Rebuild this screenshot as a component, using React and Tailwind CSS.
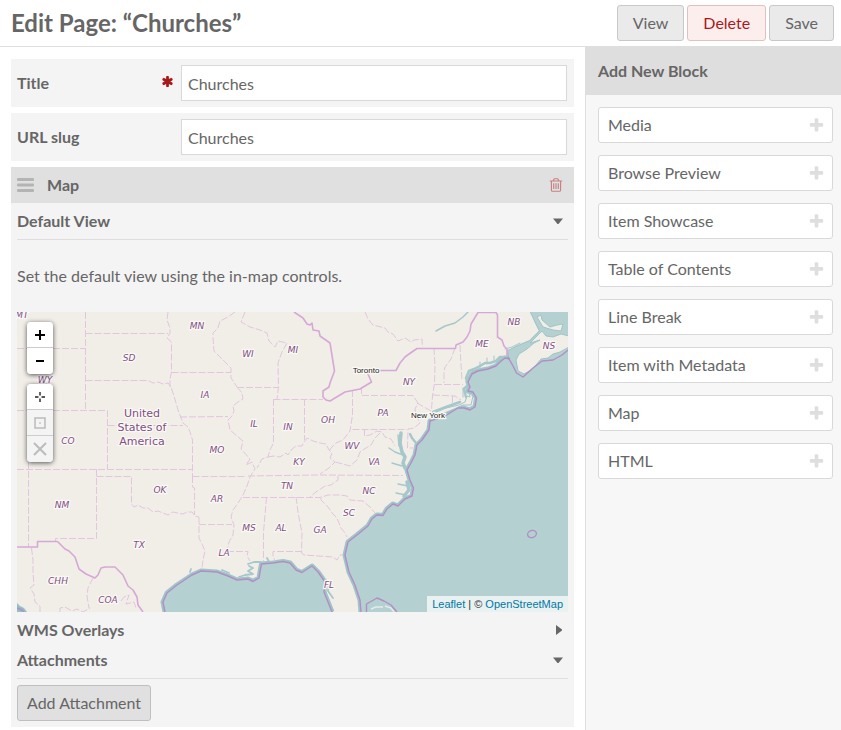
import React from "react";

const BLOCKS = [
  "Media",
  "Browse Preview",
  "Item Showcase",
  "Table of Contents",
  "Line Break",
  "Item with Metadata",
  "Map",
  "HTML",
];

const STATE_LABELS = [
  ["MT", 22, 318],
  ["MN", 197, 329],
  ["SD", 129, 361],
  ["WY", 45, 383],
  ["CO", 68, 444],
  ["IA", 205, 398],
  ["WI", 248, 357],
  ["MI", 293, 353],
  ["IL", 254, 427],
  ["IN", 288, 430],
  ["OH", 328, 423],
  ["PA", 383, 416],
  ["NY", 409, 385],
  ["ME", 482, 347],
  ["NB", 514, 325],
  ["NS", 549, 349],
  ["MO", 217, 453],
  ["KY", 299, 465],
  ["WV", 352, 449],
  ["VA", 374, 465],
  ["NM", 62, 508],
  ["OK", 160, 493],
  ["AR", 217, 502],
  ["TN", 287, 489],
  ["NC", 369, 494],
  ["SC", 349, 516],
  ["MS", 249, 531],
  ["AL", 281, 531],
  ["GA", 320, 533],
  ["TX", 139, 548],
  ["LA", 224, 556],
  ["CHH", 58, 584],
  ["COA", 108, 603],
  ["FL", 329, 588],
];

const STATE_LINES = [
  "M85.5 312V410",
  "M85.5 333.5H168",
  "M17 348.5H85",
  "M85.5 380.5H148L153 383L158 382L163 384L168 383L171 387L174 396L178 410L183 423L188 427L190 432L192.5 440V476",
  "M17 410.5H107.5V469",
  "M107.5 425.5H183",
  "M168 312L167 320L170 328V333L167 338L171.5 342V372L170 379V387",
  "M171.5 372.5H231",
  "M180 417L228 416.5",
  "M17 469.5H192",
  "M28.5 462V547",
  "M96.5 469V538.5H55.5V541",
  "M96.5 476.5H131.5V504L134 507L138 505L143 508L148 508L153 512L158 511L163 513L168 515L173 512L178 513L183 514L187 512L192 512L195 516L199 517",
  "M192.5 476V487L194.5 488V515",
  "M192.5 476.5H245",
  "M199 517V538L202 544L205 551L203 560L202 568",
  "M199 524.5H232",
  "M31.5 548L33 560V572L34 585L30 588L34 594L35 602L40 606V612",
  "M93 578L88 588L87 596L88 602L89 608",
  "M60 612V608L65 607L72 611L77 609L83 612L90 608",
  "M121 601L124 597L129 595L126 604L134 602L136 608",
  "M235 312L228 317L220 321L218 328L213 333L213 338L214 351L223 360L231 368V378L237 387",
  "M237 387.5H278",
  "M237 387L242 393L243 399L238 402L233 406L234 411L232 416L228 420L230 430L237 436L243 441L241 449L250 459L246 465L252 462L255 469L250 477L247 486L243 495L238 503L233 510L231 517L234 525L233 535L229 542L227 551",
  "M245 312L241 322L250 327L260 330L267 333L269 341L275 347L278 341L287 343L282 352L278 363L278.5 387L277 399",
  "M273.5 399.5H323",
  "M273.5 399V443L270 450L268 457L262 459L257 468",
  "M268 457L274 456L280 457L286 453L288 455L292 449L296 446L302 446L304 442L307 438L313 441L320 443L326 444L329 450L332 453L330 458L335 462L329 468L320 474",
  "M304.5 399V440",
  "M352.5 390V415L350 431L343 440L336 443L332 447L329 451",
  "M352.5 429.5H407",
  "M361.5 387V395.5H413L418 403L415 409L416 415L420 423L414 428L408 429L407.5 448H415",
  "M417 403L431 411",
  "M364.5 429V436L370 435L377 431L382 432L385 437L391 439L395 446",
  "M380 433L375 438L371 445L366 448L360 452L357 460L350 466L343 464L335 462",
  "M248 476L318 475L403 475.5",
  "M338 476V480L331 485L325 486L316 492L310 497",
  "M243 497.5H320L328 495H340L347 496L350 500L363 501L370 507L375 513",
  "M321 498V500L328 507L333 514L337 518L341 528L345 533L347 537",
  "M266.5 497L265 515L263.5 532V561",
  "M296 497L298 512L302 533L301.5 553L304 555L333 557L337 560L340 555L343 555",
  "M302 551.5H273V556L275 561",
  "M227 551.5H248L247 556L250 561",
  "M365 312L368 319L373 325L385 328L388 332L393 334L398 341L405 338L411 342L414 340L422 339L422.5 347",
  "M434 348L435 366L434.5 383L432.5 396L431.5 410",
  "M455 348L451 359L445 367L444 372V383",
  "M460 345L461 365L462 380",
  "M435 384.5H463",
  "M433 395L455 396L461 400",
  "M452.5 396V404",
];

const COUNTRY_LINES = [
  "M17 547H37.5V541.5H57.5L65 549L69 551L75 557L79 569L86 574L95 578L98 575L101 568L105 567H115L119 571L123 575L128 586L133 590L137 597L138 605L143 612",
  "M294 312L303 318L307 324L310 325L312 323L313 330L319 331L320 336L330 343L334.5 371L330 383L329 387L323 391V397L326 400L330 401L345 392L360 389L371.5 382L368 374L372 371L380 370.5H396L400 363L405 357L409 354L417 348.5H455.5L456 345L463 342L467 337L470 331L471 324L478 312.5H496L497.5 315V337L502 340L504 346L507 349V356",
];

const ATLANTIC_EDGE =
  "M510 359L505 358L500 362L496 366L488 369L478 371L472 374L468 382L470 387L468 391L473 392L476.5 398L475 407L470 410L464 408L458 408L445 416L430 421L429 430L422 440L417 445L415 455L411 463L407 470L410 480L413.5 488L412 496L405 499L398 506L393 504L387 509L383 515.5L377 515L372 519L368 526L357 535L348 542L345 555L349 572L355 585L360 600L361 612";

const GULF_EDGE =
  "M332 612L328 602L324 592L325 582L318 572L312 566L302 572.5L296 570L290 563L283 561.5L273 563L261.5 564L260 572L259 578L253 581.5L248 579L237 580L228 576L217 572L201 571L192 575L177 585L167 593L163 602L165 612";

const NOVA_SCOTIA_EDGE =
  "M508 357L513 366L516.5 373L523 377L533 368L542 361L553 360L562 355L568 350";

const ASTERISK =
  "M1546 1050q46 26 59.5 77.5t-12.5 97.5l-64 110q-26 46-77.5 59.5t-97.5-12.5l-266-153v307q0 52-38 90t-90 38h-128q-52 0-90-38t-38-90v-307l-266 153q-46 26-97.5 12.5t-77.5-59.5l-64-110q-26-46-12.5-97.5t59.5-77.5l266-154-266-154q-46-26-59.5-77.5t12.5-97.5l64-110q26-46 77.5-59.5t97.5 12.5l266 153v-307q0-52 38-90t90-38h128q52 0 90 38t38 90v307l266-153q46-26 97.5-12.5t77.5 59.5l64 110q26 46 12.5 97.5t-59.5 77.5l-266 154z";

const PLUS =
  "M1600 736v192q0 40-28 68t-68 28h-416v416q0 40-28 68t-68 28h-192q-40 0-68-28t-28-68v-416h-416q-40 0-68-28t-28-68v-192q0-40 28-68t68-28h416v-416q0-40 28-68t68-28h192q40 0 68 28t28 68v416h416q40 0 68 28t28 68z";

const TRASH =
  "M704 736v576q0 14-9 23t-23 9h-64q-14 0-23-9t-9-23v-576q0-14 9-23t23-9h64q14 0 23 9t9 23zm256 0v576q0 14-9 23t-23 9h-64q-14 0-23-9t-9-23v-576q0-14 9-23t23-9h64q14 0 23 9t9 23zm256 0v576q0 14-9 23t-23 9h-64q-14 0-23-9t-9-23v-576q0-14 9-23t23-9h64q14 0 23 9t9 23zm128 724v-948h-896v948q0 22 7 40.5t14.5 27 10.5 8.5h832q3 0 10.5-8.5t14.5-27 7-40.5zm-672-1076h448l-48-117q-7-9-17-11h-317q-10 2-17 11zm928 32v64q0 14-9 23t-23 9h-96v948q0 83-47 143.5t-113 60.5h-832q-66 0-113-58.5t-47-141.5v-952h-96q-14 0-23-9t-9-23v-64q0-14 9-23t23-9h309l70-167q15-37 54-63t79-26h320q40 0 79 26t54 63l70 167h309q14 0 23 9t9 23z";

function Glyph({ d, className }) {
  return (
    <svg viewBox="0 0 1792 1792" className={className} fill="currentColor" aria-hidden="true">
      <path d={d} />
    </svg>
  );
}

function Caret({ open }) {
  return (
    <svg viewBox="0 0 10 10" className="size-[10px]" fill="#666" aria-hidden="true">
      <path d={open ? "M0 2.5H10L5.5 8H4.5Z" : "M3 0L9 4.5V5.5L3 10Z"} />
    </svg>
  );
}

function Field({ id, label, required }) {
  return (
    <div className="flex bg-[#f4f4f4] py-[6px] pr-[7px] pl-[6px]">
      <label htmlFor={id} className="flex w-[164px] justify-between pt-[6px] pr-[7px] font-bold">
        {label}
        {required && <Glyph d={ASTERISK} className="mt-1 size-[13px] text-[#a91919]" />}
      </label>
      <input
        id={id}
        type="text"
        defaultValue="Churches"
        className="h-9 min-w-0 flex-1 border border-[#d9d9d9] bg-white px-[6px] outline-none"
      />
    </div>
  );
}

function SectionToggle({ open, children }) {
  return (
    <h3 className={open ? "border-b border-[#dedede] pb-[6px] font-bold" : "font-bold"}>
      <button
        type="button"
        aria-expanded={open}
        className="flex w-full items-center justify-between pr-[5px] text-left leading-6"
      >
        {children}
        <Caret open={open} />
      </button>
    </h3>
  );
}

function MapCanvas() {
  return (
    <svg
      viewBox="17 312 551 300"
      preserveAspectRatio="xMidYMid slice"
      className="block h-[300px] w-full bg-[#f1eee8]"
      role="img"
      aria-label="Map of the eastern United States"
    >
      <g stroke="#a0c5c8" strokeWidth="5" strokeLinejoin="round" fill="none">
        <path d={ATLANTIC_EDGE} />
        <path d={GULF_EDGE} />
        <path d="M530 310L536 323L540 331L530 341L518 346L508 351V357" strokeWidth="2" />
      </g>
      <g fill="#b5d0d0">
        <path d={ATLANTIC_EDGE + "H570V310H530L536 323L540 331L530 341L518 346L508 351Z"} />
        <path d={GULF_EDGE + "Z"} />
        <path d="M17 603L20 606L24 608L27 612H17Z" fill="#94bfc3" />
      </g>
      <g fill="#f1eee8" stroke="#a0c5c8" strokeWidth="1">
        <path d="M516 360L519 354L527 349L534 343L540 340L530 343L542 331L546 336L553 337L561 334L569 336V347L560 352L553 354L548 358L541 359L536 365L531 370L524 374L518 371Z" />
        <path d="M537 317L541 315L542 320L550 327L557 325L563 324L561 331L553 330L543 327Z" />
        <path d="M434 413L446 408L459 405L465 402L467 396L470 397L469 393L473 396L471 405L463 405L454 409L442 414L434 416Z" />
        <path d="M371 609L376 607L383 607M385 606L391 608L394 612" fill="none" stroke="#e5ecea" strokeWidth="1.4" />
      </g>
      <g fill="none" stroke="#a6c8ca" strokeLinecap="round" strokeLinejoin="round">
        <path d="M436 331L445 326L455 323L463 317L468 312" strokeWidth="1.5" />
        <path d="M506 357L500 357L496 361L490 363L485 363L480 366L474 369L469 371L466 378L468 385L464 389L466 397" strokeWidth="2.5" />
        <path d="M494 356V360M487 358V364M480 362V368M463 388V397M505 349L512 347L520 343" strokeWidth="1" />
        <path d="M433 412L446 407L460 402" strokeWidth="2.5" />
        <path d="M401 433L400 443L402 452L405 457L403 463L405 468" strokeWidth="3.5" />
        <path d="M410 434L412 438L416 443" strokeWidth="2.5" />
        <path d="M389 448L395 452L403 455M392 463L402 466M398 435L399 446M398 484L408 486M396 493L406 495" strokeWidth="1.4" />
        <path d="M407 482L409 490L404 496" strokeWidth="3.500" />
        <path d="M248 564L254 562H261M249 566L253 568L248 571L253 574L245 575L239 577M267 558L269 562M222 570L229 573M190 572L191 569" strokeWidth="1.8" />
        <path d="M326 580L329 584L328 591L333 598" strokeWidth="1.8" />
      </g>
      <g fill="none" stroke="#e2c5df" strokeWidth="1" strokeDasharray="7 2">
        {STATE_LINES.map((d) => (
          <path key={d} d={d} />
        ))}
      </g>
      <g fill="none" stroke="#d6a8d5" strokeWidth="1.6" strokeLinejoin="round">
        {COUNTRY_LINES.map((d) => (
          <path key={d} d={d} />
        ))}
      </g>
      <g fill="none" stroke="#b08fc6" strokeWidth="1.4" strokeLinejoin="round">
        <path d={ATLANTIC_EDGE} />
        <path d={GULF_EDGE} />
        <path d={NOVA_SCOTIA_EDGE} />
        <path d="M366.5 612V604L377 598L384 601L391 605L397 612" />
        <path d="M17 608L22 610L24 612" />
        <ellipse cx="532" cy="534" rx="4.5" ry="3.5" transform="rotate(-20 532 534)" />
      </g>
      <g
        textAnchor="middle"
        fill="#804f83"
        stroke="#fbf9f6"
        strokeWidth="2.5"
        strokeLinejoin="round"
        paintOrder="stroke"
        fontFamily="'DejaVu Sans', sans-serif"
      >
        <g fontSize="9" fontStyle="italic">
          {STATE_LABELS.map(([name, x, y]) => (
            <text key={name} x={x} y={y}>
              {name}
            </text>
          ))}
        </g>
        <g fontSize="11">
          <text x="142" y="417">United</text>
          <text x="142" y="431">States of</text>
          <text x="142" y="445">America</text>
        </g>
        <g fontSize="8" fill="#222" fontFamily="'Liberation Sans', Arial, sans-serif">
          <text x="366" y="373">Toronto</text>
          <text x="428" y="418">New York</text>
        </g>
      </g>
    </svg>
  );
}

const BAR = "flex w-[26px] flex-col overflow-hidden rounded shadow-[0_1px_5px_rgba(0,0,0,0.65)]";
const BAR_BUTTON = "flex h-[26px] items-center justify-center border-b border-[#ccc] bg-white last:border-b-0";
const BAR_BUTTON_OFF =
  "flex h-[26px] items-center justify-center border-b border-[#ccc] bg-[#f4f4f4] last:border-b-0";

function MapControls() {
  return (
    <div className="absolute top-[10px] left-[10px] flex flex-col gap-[10px]">
      <div className={BAR}>
        <button type="button" aria-label="Zoom in" className={BAR_BUTTON}>
          <svg viewBox="0 0 10 10" className="size-[10px]" stroke="#000" strokeWidth="2">
            <path d="M5 0V10M0 5H10" />
          </svg>
        </button>
        <button type="button" aria-label="Zoom out" className={BAR_BUTTON}>
          <svg viewBox="0 0 10 10" className="size-[10px]" stroke="#000" strokeWidth="2">
            <path d="M1 5H9" />
          </svg>
        </button>
      </div>
      <div className={BAR}>
        <button type="button" aria-label="Set the current view as the default view" className={BAR_BUTTON}>
          <svg viewBox="0 0 10 10" className="size-[10px]" stroke="#222" strokeWidth="1.4">
            <path d="M5 0V3.5M5 6.5V10M0 5H3.5M6.5 5H10" />
          </svg>
        </button>
        <button type="button" disabled aria-label="Go to the default view" className={BAR_BUTTON_OFF}>
          <svg viewBox="0 0 12 12" className="size-3" fill="none" stroke="#bbb" strokeWidth="1.5">
            <path d="M1 1H11V11H1ZM5.25 6H6.75" />
          </svg>
        </button>
        <button type="button" disabled aria-label="Clear the default view" className={BAR_BUTTON_OFF}>
          <svg viewBox="0 0 14 14" className="size-[14px]" stroke="#bbb" strokeWidth="2">
            <path d="M1 1L13 13M13 1L1 13" />
          </svg>
        </button>
      </div>
    </div>
  );
}

export default function App() {
  return (
    <div className="flex min-h-screen flex-col bg-white font-['Lato',sans-serif] text-base leading-6 text-[#666]">
      <header className="flex items-center justify-between border-b border-[#dedede] py-[5px] pr-[7px] pl-[11px]">
        <h1 className="text-2xl leading-9 font-bold">Edit Page: “Churches”</h1>
        <div className="flex gap-[3px]">
          <button type="button" className="h-9 rounded-[3px] border border-[#c8c8c8] bg-[#eaeaea] px-[15px]">
            View
          </button>
          <button
            type="button"
            className="h-9 rounded-[3px] border border-[#e3c0c0] bg-[#fdeeee] px-[15px] text-[#a91919]"
          >
            Delete
          </button>
          <button type="button" className="h-9 rounded-[3px] border border-[#c8c8c8] bg-[#eaeaea] px-[15px]">
            Save
          </button>
        </div>
      </header>

      <div className="flex flex-1">
        <main className="flex min-w-0 flex-1 flex-col gap-[6px] px-[11px] pt-3">
          <Field id="title" label="Title" required />
          <Field id="slug" label="URL slug" />

          <section className="bg-[#f4f4f4]">
            <div className="flex h-9 items-center bg-[#e0e0e0] px-[6px]">
              <svg viewBox="0 0 17 14" className="h-[14px] w-[17px]" fill="#b4b4b4" aria-hidden="true">
                <rect width="17" height="3" rx="1" />
                <rect y="5.5" width="17" height="3" rx="1" />
                <rect y="11" width="17" height="3" rx="1" />
              </svg>
              <h2 className="ml-[13px] flex-1 font-bold">Map</h2>
              <button type="button" aria-label="Remove block" className="pr-1 text-[#c98080]">
                <Glyph d={TRASH} className="size-4" />
              </button>
            </div>

            <div className="px-[6px] py-[6px]">
              <SectionToggle open>Default View</SectionToggle>
              <p className="my-6">Set the default view using the in-map controls.</p>
              <div className="relative">
                <MapCanvas />
                <MapControls />
                <p className="absolute right-0 bottom-0 bg-white/70 px-[5px] font-['Liberation_Sans',Arial,sans-serif] text-[11px] leading-4 text-[#333]">
                  <a href="#leaflet" className="text-[#0078a8]">Leaflet</a> | ©{" "}
                  <a href="#osm" className="text-[#0078a8]">OpenStreetMap</a>
                </p>
              </div>
              <div className="flex flex-col gap-[6px] pt-[6px]">
                <SectionToggle open={false}>WMS Overlays</SectionToggle>
                <SectionToggle open>Attachments</SectionToggle>
                <button
                  type="button"
                  className="h-9 self-start rounded-[3px] border border-[#bfbfbf] bg-[#e0e0e0] px-[9px]"
                >
                  Add Attachment
                </button>
              </div>
            </div>
          </section>
        </main>

        <aside className="w-64 border-l border-[#dedede] bg-[#f7f7f7]">
          <h2 className="bg-[#dedede] px-3 py-3 font-bold">Add New Block</h2>
          <div className="flex flex-col gap-3 py-3 pr-2 pl-3">
            {BLOCKS.map((name) => (
              <button
                key={name}
                type="button"
                className="flex h-9 items-center justify-between rounded-[3px] border border-[#d9d9d9] bg-white pr-[7px] pl-[9px]"
              >
                {name}
                <Glyph d={PLUS} className="size-[17px] text-[#dedede]" />
              </button>
            ))}
          </div>
        </aside>
      </div>
    </div>
  );
}
